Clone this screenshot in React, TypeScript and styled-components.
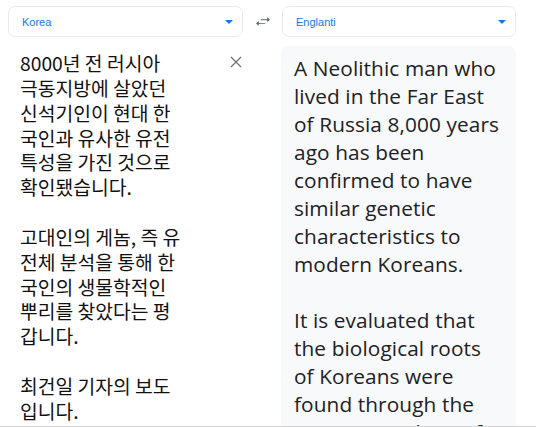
import React from 'react'
import styled, { createGlobalStyle } from 'styled-components'

const GlobalStyle = createGlobalStyle`
  html, body {
    margin: 0;
    padding: 0;
    background: #fff;
  }
`

const Page = styled.div`
  width: 536px;
  height: 427px;
  box-sizing: border-box;
  border-bottom: 1px solid #d6d6d6;
  overflow: hidden;
  padding: 6px 20px 0 8px;
`

const Toolbar = styled.div`
  display: grid;
  grid-template-columns: 235px 1fr 234px;
  align-items: center;
  height: 31px;
`

const Select = styled.div`
  height: 31px;
  box-sizing: border-box;
  border: 1px solid #e8eaed;
  border-radius: 7px;
  display: flex;
  align-items: center;
  justify-content: space-between;
  padding: 0 9px 0 13px;
  font-family: 'Liberation Sans', Arial, sans-serif;
  font-size: 11px;
  color: #1a73e8;
`

const Caret = styled.span`
  width: 0;
  height: 0;
  border-left: 4px solid transparent;
  border-right: 4px solid transparent;
  border-top: 4px solid #1a73e8;
  margin-top: 1px;
`

const SwapButton = styled.div`
  display: flex;
  justify-content: center;
  align-items: center;
  color: #5f6368;
  padding-left: 1px;
`

const Body = styled.div`
  display: grid;
  grid-template-columns: 235px 1fr 235px;
  margin-top: 9px;
`

const Source = styled.div`
  display: flex;
  align-items: flex-start;
  padding: 5px 0 0 12px;
`

const SourceText = styled.div`
  flex: 1;
  font-family: 'Noto Sans CJK KR', 'Noto Sans', sans-serif;
  font-size: 19.3px;
  line-height: 24.85px;
  color: #111;
  white-space: pre;
`

const ClearButton = styled.div`
  width: 14px;
  height: 14px;
  margin: 4px 0 0 0;
  color: #70757a;
  display: flex;
`

const Target = styled.div`
  grid-column: 3;
  background: #f8f9fa;
  border-radius: 8px 8px 0 0;
  padding: 8px 0 0 13px;
  height: 400px;
  overflow: hidden;
`

const TargetText = styled.div`
  font-family: 'Open Sans', Roboto, sans-serif;
  font-size: 20.8px;
  letter-spacing: 0.1px;
  line-height: 28px;
  color: #202124;
  white-space: pre;
`

const sourceText = `8000년 전 러시아
극동지방에 살았던
신석기인이 현대 한
국인과 유사한 유전
특성을 가진 것으로
확인됐습니다.

고대인의 게놈, 즉 유
전체 분석을 통해 한
국인의 생물학적인
뿌리를 찾았다는 평
갑니다.

최건일 기자의 보도
입니다.`

const targetText = `A Neolithic man who
lived in the Far East
of Russia 8,000 years
ago has been
confirmed to have
similar genetic
characteristics to
modern Koreans.

It is evaluated that
the biological roots
of Koreans were
found through the
genome analysis of`

const App: React.FC = () => (
  <>
    <GlobalStyle />
    <Page>
      <Toolbar>
        <Select>
          <span>Korea</span>
          <Caret />
        </Select>
        <SwapButton>
          <svg width="14" height="10" viewBox="0 0 15 10" fill="currentColor">
            <path d="M5 2h7V0l3 2.5L12 5V3H5z" />
            <path d="M10 6H3V4L0 6.5 3 9V7h7z" />
          </svg>
        </SwapButton>
        <Select>
          <span>Englanti</span>
          <Caret />
        </Select>
      </Toolbar>
      <Body>
        <Source>
          <SourceText>{sourceText}</SourceText>
          <ClearButton>
            <svg width="14" height="14" viewBox="0 0 14 14" stroke="currentColor" strokeWidth="1.4">
              <path d="M2 2l10 10M12 2L2 12" />
            </svg>
          </ClearButton>
        </Source>
        <Target>
          <TargetText>{targetText}</TargetText>
        </Target>
      </Body>
    </Page>
  </>
)

export default App
